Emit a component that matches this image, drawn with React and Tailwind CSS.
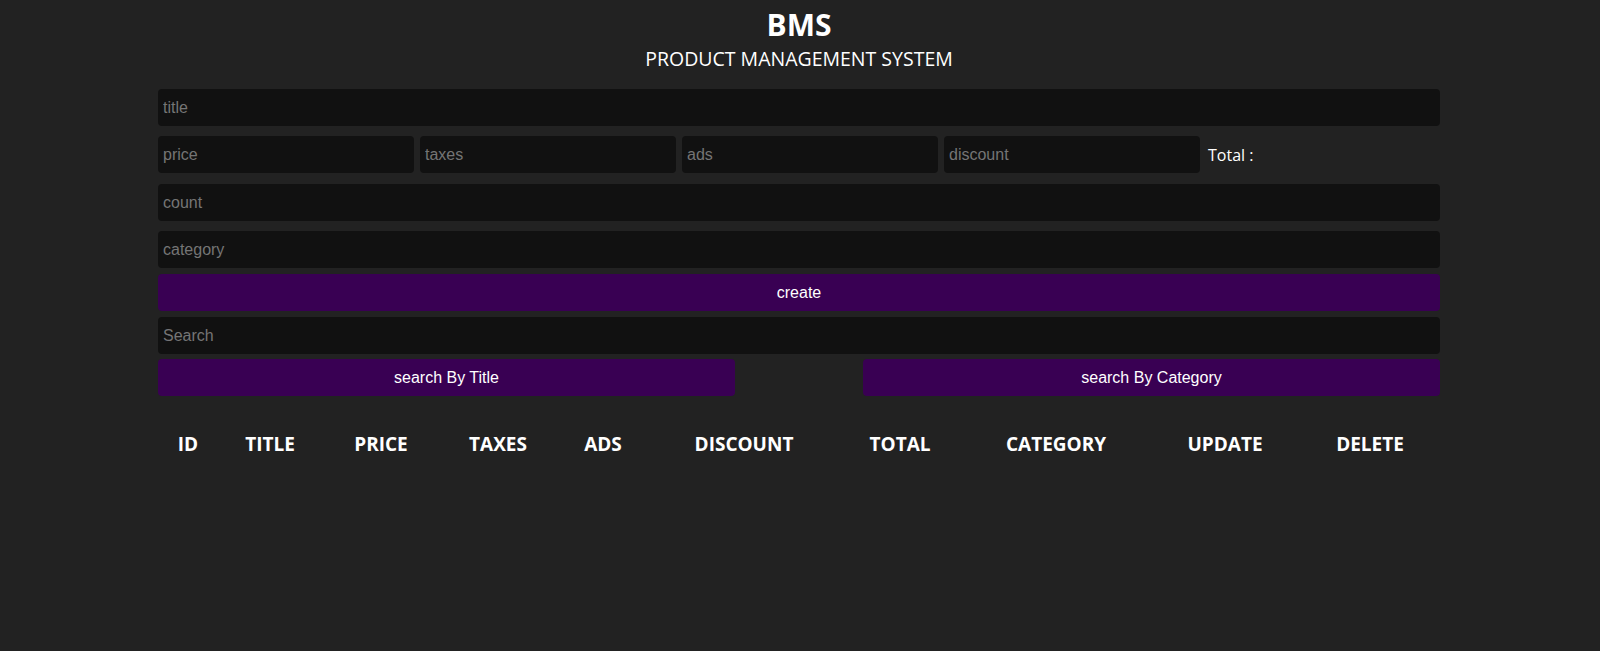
import React from 'react';

const heads = [
  ['ID', 'w-[60px]'],
  ['TITLE', 'w-[104px]'],
  ['PRICE', 'w-[118px]'],
  ['TAXES', 'w-[116px]'],
  ['ADS', 'w-[94px]'],
  ['DISCOUNT', 'w-[188px]'],
  ['TOTAL', 'w-[124px]'],
  ['CATEGORY', 'w-[188px]'],
  ['UPDATE', 'w-[150px]'],
  ['DELETE', 'w-[140px]'],
];

const field =
  'block h-[37px] rounded bg-[#111] px-[5px] text-[16px] text-white outline-none placeholder:text-[#757575]';

const App = () => {
  return (
    <div className="min-h-screen bg-[#222] text-white" style={{ fontFamily: '"Open Sans", sans-serif' }}>
      <div className="ml-[158px] w-[1282px]">
        {/* header */}
        <div className="pt-[6px] text-center">
          <h2 className="text-[30px] font-bold leading-[38px]">BMS</h2>
          <p className="mt-[1px] text-[19.5px] leading-[28px]">PRODUCT MANAGEMENT SYSTEM</p>
        </div>

        {/* inputs */}
        <div className="mt-[16px] font-['Liberation_Sans',Arial,sans-serif]">
          <input className={`${field} w-full`} placeholder="title" />
          <div className="mt-[10px] flex items-center gap-[6px]">
            <input className={`${field} w-[256px]`} placeholder="price" />
            <input className={`${field} w-[256px]`} placeholder="taxes" />
            <input className={`${field} w-[256px]`} placeholder="ads" />
            <input className={`${field} w-[256px]`} placeholder="discount" />
            <small className="ml-[2px] text-[16px] font-['Open_Sans',sans-serif]">Total :</small>
          </div>
          <input className={`${field} mt-[11px] w-full`} placeholder="count" />
          <input className={`${field} mt-[10px] w-full`} placeholder="category" />
          <button className="mt-[6px] block h-[37px] w-full rounded bg-[#390053] text-[16px] text-white">create</button>
          <input className={`${field} mt-[6px] w-full`} placeholder="Search" />
          <div className="mt-[5px] flex justify-between">
            <button className="h-[37px] w-[577px] rounded bg-[#390053] text-[16px] text-white">search By Title</button>
            <button className="h-[37px] w-[577px] rounded bg-[#390053] text-[16px] text-white">search By Category</button>
          </div>
        </div>

        {/* table */}
        <table className="mt-[29px] w-full table-fixed">
          <thead>
            <tr>
              {heads.map(([h, w]) => (
                <th key={h} className={`${w} text-center text-[19px] font-bold leading-[38px]`}>
                  {h}
                </th>
              ))}
            </tr>
          </thead>
          <tbody></tbody>
        </table>
      </div>
    </div>
  );
};

export default App;
